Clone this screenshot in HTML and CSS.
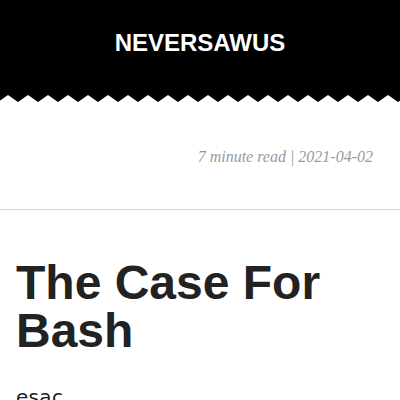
FILE: index.html
```html
<!DOCTYPE html>
<html>
<head>
<meta charset="utf-8">
<link rel="stylesheet" href="styles.css">
</head>
<body>
<header class="site-header">
  <div class="brand">NEVERSAWUS</div>
</header>
<svg class="zigzag" width="400" height="7" viewBox="0 0 400 7" aria-hidden="true">
  <defs>
    <pattern id="teeth" x="8" y="0" width="20" height="7" patternUnits="userSpaceOnUse">
      <path d="M0 0 L20 0 L10 7 Z" fill="#000"/>
    </pattern>
  </defs>
  <rect x="0" y="0" width="400" height="7" fill="url(#teeth)"/>
</svg>
<div class="meta">7 minute read | 2021-04-02</div>
<article class="post">
  <h1 class="title">The Case For Bash</h1>
  <p class="body-text">esac</p>
</article>
</body>
</html>
```
FILE: styles.css
```css
html, body {
  margin: 0;
  padding: 0;
  background: #fff;
}
.site-header {
  height: 95px;
  background: #000;
  display: flex;
  align-items: center;
  justify-content: center;
}
.brand {
  color: #fff;
  font-family: "Liberation Sans", Arial, sans-serif;
  font-weight: bold;
  font-size: 24px;
  padding-bottom: 9px;
}
.zigzag {
  display: block;
}
.meta {
  height: 108px;
  box-sizing: border-box;
  display: flex;
  align-items: center;
  justify-content: flex-end;
  padding: 2px 27px 0 0;
  border-bottom: 1px solid #d4d4d4;
  font-family: "Liberation Serif", "Times New Roman", serif;
  font-style: italic;
  font-size: 16px;
  color: #9a9a9a;
}
.post {
  padding: 0 16px;
}
.title {
  margin: 49px 0 0;
  font-family: "Liberation Sans", Arial, sans-serif;
  font-weight: bold;
  font-size: 48px;
  line-height: 48px;
  color: #222;
}
.body-text {
  margin: 27px 0 0;
  font-family: "DejaVu Sans", sans-serif;
  font-size: 20px;
  line-height: 30px;
  letter-spacing: 0.3px;
  color: #222;
}
```
